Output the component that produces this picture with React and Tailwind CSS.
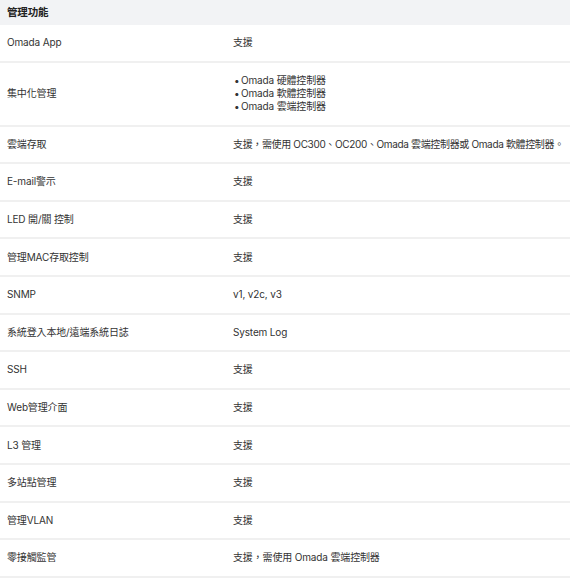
import React from 'react';

const rows = [
  { label: 'Omada App', value: '支援' },
  {
    label: '集中化管理',
    list: ['Omada 硬體控制器', 'Omada 軟體控制器', 'Omada 雲端控制器'],
  },
  { label: '雲端存取', value: '支援，需使用 OC300、OC200、Omada 雲端控制器或 Omada 軟體控制器。', tight: true },
  { label: 'E-mail警示', value: '支援' },
  { label: 'LED 開/關 控制', value: '支援' },
  { label: '管理MAC存取控制', value: '支援' },
  { label: 'SNMP', value: 'v1, v2c, v3' },
  { label: '系統登入本地/遠端系統日誌', value: 'System Log' },
  { label: 'SSH', value: '支援' },
  { label: 'Web管理介面', value: '支援' },
  { label: 'L3 管理', value: '支援' },
  { label: '多站點管理', value: '支援' },
  { label: '管理VLAN', value: '支援' },
  { label: '零接觸監管', value: '支援，需使用 Omada 雲端控制器' },
];

export default function App() {
  return (
    <div
      className="w-[570px] h-[582px] bg-white text-[#333] text-[10px] tracking-[-0.15px] overflow-hidden"
      style={{ fontFamily: 'Inter, "Noto Sans CJK TC", sans-serif' }}
    >
      {/* 標題列 */}
      <div className="h-[25px] bg-[#f2f3f5] flex items-center px-[7px]">
        <span className="font-bold text-[10.5px] text-[#222]">管理功能</span>
      </div>

      {rows.map((row, i) => (
        <div
          key={i}
          className={`flex items-center border-b-2 border-[#f0f0f0] ${
            row.list ? 'h-[64px]' : 'h-[37.6px]'
          }`}
        >
          <div className="w-[233px] shrink-0 pl-[7px]">{row.label}</div>
          <div className={`flex-1 whitespace-nowrap ${row.tight ? 'tracking-[-0.35px]' : ''}`}>
            {row.list ? (
              <ul className="leading-[13px]">
                {row.list.map((item) => (
                  <li key={item} className="flex">
                    <span className="w-[8px] pl-[1px]">•</span>
                    <span>{item}</span>
                  </li>
                ))}
              </ul>
            ) : (
              row.value
            )}
          </div>
        </div>
      ))}
    </div>
  );
}
